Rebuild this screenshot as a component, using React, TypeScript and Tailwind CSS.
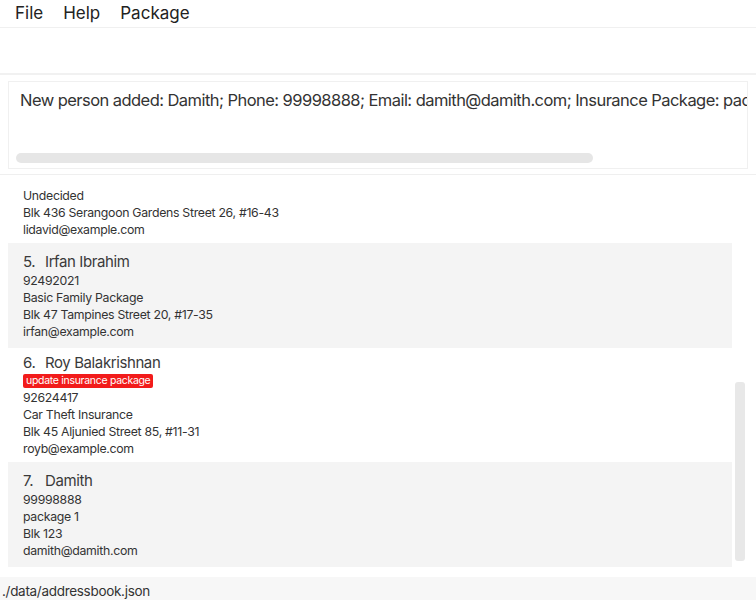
import React from "react";

type Person = {
  index?: number;
  name?: string;
  tag?: string;
  lines: string[];
  shaded: boolean;
  pad: string;
};

const people: Person[] = [
  {
    lines: ["Undecided", "Blk 436 Serangoon Gardens Street 26, #16-43", "lidavid@example.com"],
    shaded: false,
    pad: "pt-0 pb-[5px]",
  },
  {
    index: 5,
    name: "Irfan Ibrahim",
    lines: ["92492021", "Basic Family Package", "Blk 47 Tampines Street 20, #17-35", "irfan@example.com"],
    shaded: true,
    pad: "pt-[9px] pb-[8px]",
  },
  {
    index: 6,
    name: "Roy Balakrishnan",
    tag: "update insurance package",
    lines: ["92624417", "Car Theft Insurance", "Blk 45 Aljunied Street 85, #11-31", "royb@example.com"],
    shaded: false,
    pad: "pt-[5px] pb-[5px]",
  },
  {
    index: 7,
    name: "Damith",
    lines: ["99998888", "package 1", "Blk 123", "damith@damith.com"],
    shaded: true,
    pad: "pt-[9px] pb-[8px]",
  },
];

function PersonCard({ p }: { p: Person }) {
  return (
    <div className={`pl-[15px] ${p.shaded ? "bg-[#f4f4f4]" : "bg-white"} ${p.pad}`}>
      {p.name && (
        <div className="flex text-[15px] leading-[20px] tracking-[-0.4px] text-[#3a3a3a]">
          <span className="w-[22px]">{p.index}.</span>
          <span>{p.name}</span>
        </div>
      )}
      {p.tag && (
        <div className="flex">
          <span className="bg-[#f21b1b] text-white text-[10.5px] leading-[14px] tracking-[-0.3px] px-[3px] rounded-[2px] my-[1px]">
            {p.tag}
          </span>
        </div>
      )}
      {p.lines.map((l) => (
        <div key={l} className="text-[12.3px] leading-[17px] tracking-[-0.3px] text-[#333]">
          {l}
        </div>
      ))}
    </div>
  );
}

export default function App() {
  return (
    <div className="w-[756px] h-[600px] flex flex-col bg-white overflow-hidden font-['Inter',sans-serif]">
      {/* menu bar */}
      <div className="h-[28px] flex-none flex items-center gap-[20px] pl-[15px] text-[17px] text-[#222] border-b border-[#f0f0f0]">
        <span>File</span>
        <span>Help</span>
        <span>Package</span>
      </div>

      {/* command box */}
      <div className="h-[47px] flex-none border-b-2 border-[#f1f1f1]" />

      {/* result display */}
      <div className="h-[100px] flex-none px-[8px] pt-[6px] border-b border-[#efefef]">
        <div className="h-[88px] border border-[#f0f0f0] pl-[11px] pt-[8px] overflow-hidden flex flex-col">
          <div className="whitespace-nowrap text-[16.5px] leading-[20px] tracking-[-0.55px] text-[#333]">
            New person added: Damith; Phone: 99998888; Email: damith@damith.com; Insurance Package: package 1; Address: Blk 123
          </div>
          <div className="mt-auto mb-[5px] ml-[-4px] h-[10px] w-[577px] rounded-full bg-[#e6e6e6]" />
        </div>
      </div>

      {/* person list */}
      <div className="flex-1 flex pl-[8px] pt-[12px] overflow-hidden">
        <div className="w-[724px] flex flex-col">
          {people.map((p, i) => (
            <PersonCard key={i} p={p} />
          ))}
        </div>
        <div className="flex-1 relative">
          <div className="absolute left-[3px] top-[195px] w-[10px] h-[179px] rounded-[3px] bg-[#e8e8e8]" />
        </div>
      </div>

      {/* status bar */}
      <div className="h-[23px] flex-none bg-[#f7f7f7] pl-[2px] pt-[6px] flex items-start text-[13.5px] leading-[17px] tracking-[-0.3px] text-[#333]">
        ./data/addressbook.json
      </div>
    </div>
  );
}
